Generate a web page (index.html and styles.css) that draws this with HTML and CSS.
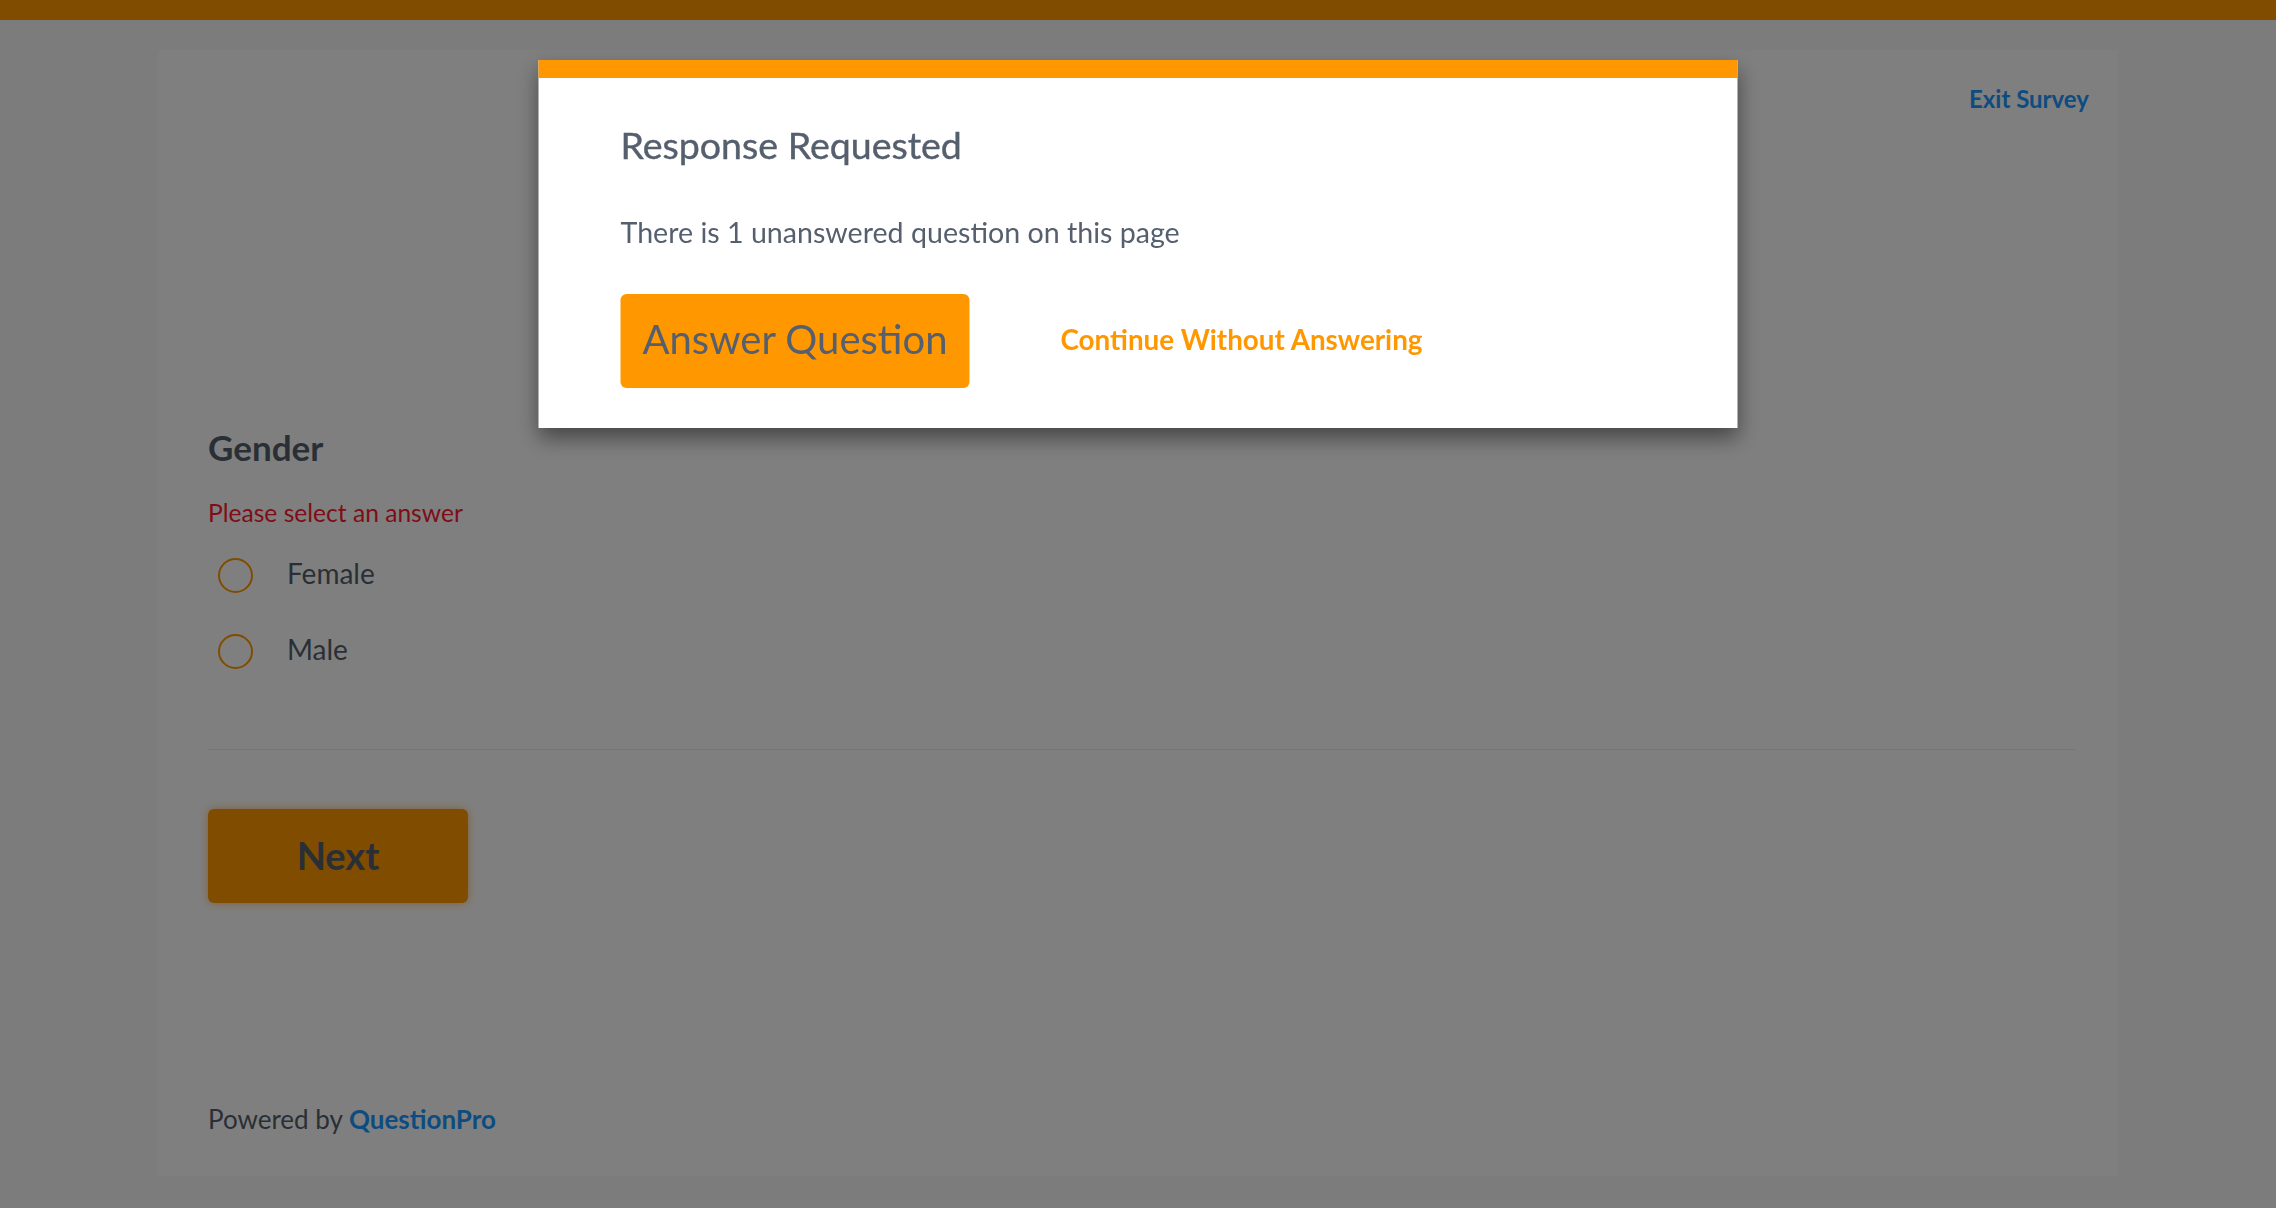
FILE: index.html
```html
<!DOCTYPE html>
<html lang="en">
<head>
<meta charset="utf-8">
<title>Survey</title>
<link rel="stylesheet" href="styles.css">
</head>
<body>
<div class="topbar"></div>
<main class="survey">
  <header class="survey-header">
    <a class="exit-link" href="#">Exit Survey</a>
  </header>
  <section class="survey-body">
    <h2 class="question-title">Gender</h2>
    <p class="error-text">Please select an answer</p>
    <ul class="options">
      <li class="option"><span class="radio"></span><span class="option-label">Female</span></li>
      <li class="option"><span class="radio"></span><span class="option-label">Male</span></li>
    </ul>
    <hr class="divider">
    <button class="next-btn" type="button">Next</button>
    <p class="powered">Powered by <a class="brand" href="#">QuestionPro</a></p>
  </section>
</main>
<div class="overlay"></div>
<div class="modal" role="dialog">
  <h3 class="modal-title">Response Requested</h3>
  <p class="modal-text">There is 1 unanswered question on this page</p>
  <div class="modal-actions">
    <button class="answer-btn" type="button">Answer Question</button>
    <a class="continue-link" href="#">Continue Without Answering</a>
  </div>
</div>
</body>
</html>
```
FILE: styles.css
```css
* { box-sizing: border-box; }
html, body { margin: 0; padding: 0; }
body {
  background: #f8f8f8;
  font-family: Lato, "Noto Sans", "Liberation Sans", sans-serif;
  color: #555f6d;
  height: 1208px;
  overflow: hidden;
}
.topbar {
  height: 20px;
  background: #ff9800;
}
.survey {
  width: 1960px;
  margin: 30px auto 0;
  background: #ffffff;
  height: 1126px;
  display: flex;
  flex-direction: column;
}
.survey-header {
  display: flex;
  justify-content: flex-end;
  padding: 37px 29px 0 0;
}
.exit-link {
  font-size: 24px;
  line-height: 1;
  font-weight: 700;
  color: #1c98ff;
  text-decoration: none;
}
.survey-body {
  padding: 319px 43px 0 50px;
  display: flex;
  flex-direction: column;
  align-items: flex-start;
}
.question-title {
  margin: 0;
  font-size: 35px;
  line-height: 1;
  font-weight: 700;
}
.error-text {
  margin: 36px 0 0;
  font-size: 24.6px;
  line-height: 1;
  color: #ff1a30;
}
.options {
  list-style: none;
  margin: 32px 0 0;
  padding: 0;
  display: flex;
  flex-direction: column;
  gap: 41px;
}
.option {
  display: flex;
  align-items: center;
  height: 35px;
  padding-left: 10px;
  gap: 34px;
}
.radio {
  width: 35px;
  height: 35px;
  border: 2px solid #ff9800;
  border-radius: 50%;
}
.option-label {
  font-size: 28px;
  line-height: 1;
  padding-bottom: 5px;
}
.divider {
  align-self: stretch;
  margin: 80px 0 0;
  border: 0;
  height: 1px;
  background: #e8e8e8;
}
.next-btn {
  margin-top: 59px;
  width: 260px;
  height: 94px;
  border: 0;
  border-radius: 6px;
  background: #ff9800;
  box-shadow: 0 0 8px rgba(255, 152, 0, 0.6);
  font-family: inherit;
  font-size: 38px;
  font-weight: 700;
  color: #555f6d;
  padding: 0 0 2px;
}
.powered {
  margin: 203px 0 0;
  font-size: 26px;
  line-height: 1;
}
.brand {
  color: #1c98ff;
  font-weight: 700;
  text-decoration: none;
}
.overlay {
  position: fixed;
  inset: 0;
  background: rgba(0, 0, 0, 0.5);
}
.modal {
  position: fixed;
  top: 60px;
  left: 50%;
  transform: translateX(-50%);
  width: 1199px;
  height: 368px;
  background: #ffffff;
  border-top: 18px solid #ff9800;
  box-shadow: 0 10px 20px rgba(0, 0, 0, 0.45);
  padding: 48px 82px 40px;
}
.modal-title {
  margin: 0;
  font-size: 37.5px;
  line-height: 1;
  font-weight: 400;
  color: #555f6d;
  -webkit-text-stroke: 0.4px #555f6d;
}
.modal-text {
  margin: 54px 0 0;
  font-size: 28.6px;
  line-height: 1;
  color: #555f6d;
}
.modal-actions {
  margin-top: 48px;
  display: flex;
  align-items: center;
  gap: 91px;
}
.answer-btn {
  height: 94px;
  padding: 0 22px 5px;
  border: 0;
  border-radius: 6px;
  background: #ff9800;
  font-family: inherit;
  font-size: 40px;
  color: #555f6d;
}
.continue-link {
  font-size: 27.8px;
  line-height: 1;
  font-weight: 700;
  color: #ff9800;
  text-decoration: none;
  padding-bottom: 3px;
}
```
